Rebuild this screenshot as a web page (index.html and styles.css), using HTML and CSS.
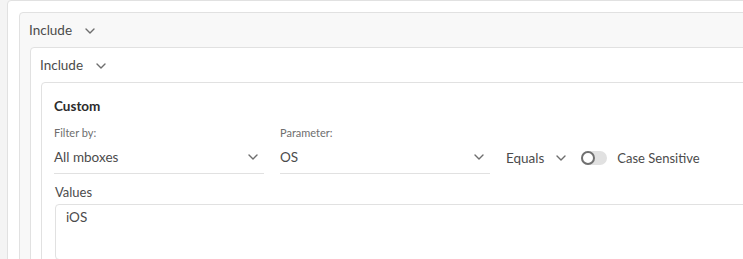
FILE: index.html
```html
<!DOCTYPE html>
<html lang="en">
<head>
  <meta charset="UTF-8">
  <title>Audience Rules</title>
  <link rel="stylesheet" href="styles.css">
</head>
<body>
  <div class="panel">
    <section class="group group-outer">
      <header class="group-header">
        <span>Include</span>
        <svg class="chevron" width="10" height="6" viewBox="0 0 10 6"><path d="M1 1l4 4 4-4" /></svg>
      </header>
      <section class="group group-inner">
        <header class="group-header">
          <span>Include</span>
          <svg class="chevron" width="10" height="6" viewBox="0 0 10 6"><path d="M1 1l4 4 4-4" /></svg>
        </header>
        <div class="rule-card">
          <h3 class="rule-title">Custom</h3>
          <div class="rule-row">
            <div class="field">
              <label class="field-label">Filter by:</label>
              <div class="picker">
                <span>All mboxes</span>
                <svg class="chevron" width="10" height="6" viewBox="0 0 10 6"><path d="M1 1l4 4 4-4" /></svg>
              </div>
            </div>
            <div class="field">
              <label class="field-label">Parameter:</label>
              <div class="picker">
                <span>OS</span>
                <svg class="chevron" width="10" height="6" viewBox="0 0 10 6"><path d="M1 1l4 4 4-4" /></svg>
              </div>
            </div>
            <div class="operator">
              <span>Equals</span>
              <svg class="chevron" width="10" height="6" viewBox="0 0 10 6"><path d="M1 1l4 4 4-4" /></svg>
            </div>
            <label class="switch">
              <span class="switch-track"><span class="switch-knob"></span></span>
              <span>Case Sensitive</span>
            </label>
          </div>
          <div class="values">
            <label class="values-label">Values</label>
            <div class="values-box">iOS</div>
          </div>
        </div>
      </section>
    </section>
  </div>
</body>
</html>
```

FILE: styles.css
```css
/* Base */
:root {
  --text-color: #4b4b4b;
  --label-color: #6e6e6e;
  --title-color: #2c2c2c;
  --border-color: #e1e1e1;
  --page-bg: #f4f4f4;
  --group-bg: #f8f8f8;
  --radius: 4px;
}

* {
  margin: 0;
  padding: 0;
  box-sizing: border-box;
}

body {
  font-family: Lato, 'Open Sans', sans-serif;
  color: var(--text-color);
  background-color: var(--page-bg);
  padding: 0 0 0 7px;
  overflow: hidden;
}

.chevron {
  fill: none;
  stroke: #6e6e6e;
  stroke-width: 1.4;
  stroke-linecap: round;
  stroke-linejoin: round;
}

/* Panels */
.panel {
  width: 820px;
  background: #fff;
  border: 1px solid var(--border-color);
  border-radius: var(--radius);
  padding: 11px 0 0 11px;
}

.group {
  border: 1px solid var(--border-color);
  border-radius: var(--radius);
  padding-left: 10px;
}

.group-outer {
  background-color: var(--group-bg);
}

.group-inner {
  background-color: #fff;
}

.group-header {
  display: flex;
  align-items: center;
  gap: 13px;
  height: 34px;
  margin-left: -1px;
  font-size: 13.5px;
}

.group-header .chevron {
  margin-top: 1px;
}

/* Rule card */
.rule-card {
  border: 1px solid var(--border-color);
  border-radius: var(--radius);
  padding: 13px 0 0 12px;
  height: 200px;
}

.rule-title {
  font-size: 13.5px;
  font-weight: 700;
  color: var(--title-color);
  line-height: 20px;
  margin-bottom: 9px;
}

.rule-row {
  display: flex;
  align-items: flex-end;
  gap: 16px;
}

.field {
  width: 210px;
}

.field-label {
  display: block;
  font-size: 11px;
  line-height: 16px;
  color: var(--label-color);
}

.picker {
  display: flex;
  align-items: center;
  justify-content: space-between;
  height: 33px;
  padding-right: 6px;
  font-size: 13.5px;
  border-bottom: 1px solid var(--border-color);
}

.operator {
  display: flex;
  align-items: center;
  gap: 12px;
  height: 33px;
  font-size: 13.5px;
}

.switch {
  display: flex;
  align-items: center;
  gap: 10px;
  height: 33px;
  font-size: 13px;
  margin-left: -1px;
}

.switch-track {
  display: flex;
  align-items: center;
  width: 26px;
  height: 14px;
  border-radius: 7px;
  background: #e1e1e1;
}

.switch-knob {
  width: 14px;
  height: 14px;
  border-radius: 50%;
  border: 2px solid #707070;
  background: #fff;
}

/* Values */
.values {
  margin-top: 9px;
  margin-left: 2px;
}

.values-label {
  display: block;
  font-size: 13px;
  line-height: 18px;
  color: var(--text-color);
  margin-left: -1px;
  margin-bottom: 3px;
}

.values-box {
  height: 56px;
  margin-left: -1px;
  border: 1px solid var(--border-color);
  border-radius: var(--radius);
  padding: 4px 10px;
  font-size: 13.5px;
}
```
